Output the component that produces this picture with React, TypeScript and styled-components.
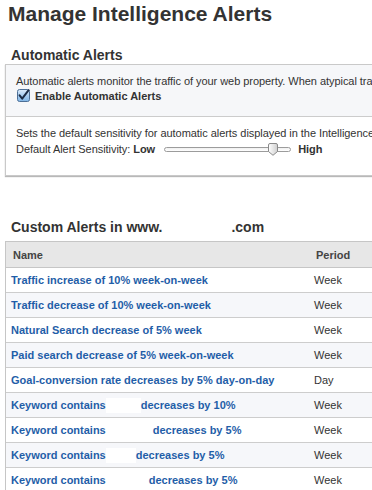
import React from "react";
import styled, { createGlobalStyle } from "styled-components";

const GlobalStyle = createGlobalStyle`
  html, body {
    margin: 0;
    padding: 0;
    overflow: hidden;
    background: #ffffff;
  }
  body {
    font-family: "Liberation Sans", Arial, Helvetica, sans-serif;
    color: #333333;
  }
`;

const Page = styled.div`
  width: 490px;
`;

const Title = styled.h1`
  margin: 2px 0 0 8px;
  font-size: 21px;
  line-height: 24px;
  font-weight: bold;
  color: #333333;
  white-space: nowrap;
`;

const SectionTitle = styled.h2<{ $top: number; $bottom: number }>`
  margin: ${(p) => p.$top}px 0 ${(p) => p.$bottom}px 11px;
  font-size: 14px;
  line-height: 16px;
  font-weight: bold;
  color: #333333;
  white-space: nowrap;
  display: flex;
  align-items: baseline;
`;

const Redacted = styled.span<{ $w: number }>`
  display: inline-block;
  width: ${(p) => p.$w}px;
`;

const Panel = styled.div`
  margin-left: 5px;
  width: 480px;
  border: 1px solid #c9c9c9;
  box-shadow: 0 1px 1px rgba(0, 0, 0, 0.28);
`;

const PanelSection = styled.div<{ $tint?: boolean; $bottom: number; $divider?: boolean }>`
  padding: 9px 10px ${(p) => p.$bottom}px 10px;
  background: ${(p) => (p.$tint ? "#f6f7f9" : "#ffffff")};
  border-top: ${(p) => (p.$divider ? "1px solid #cccccc" : "none")};
`;

const Text = styled.div`
  font-size: 11px;
  line-height: 14px;
  letter-spacing: -0.05px;
  color: #333333;
  white-space: nowrap;
`;

const CheckRow = styled.label`
  display: flex;
  align-items: center;
  height: 15px;
  gap: 5px;
  padding-left: 1px;
  font-size: 11px;
  font-weight: bold;
  color: #333333;
  white-space: nowrap;
`;

const SliderRow = styled.div`
  display: flex;
  align-items: center;
  height: 18px;
  font-size: 11px;
  letter-spacing: -0.05px;
  color: #333333;
  white-space: nowrap;
`;

const Strong = styled.b`
  font-weight: bold;
`;

const Track = styled.div`
  position: relative;
  width: 127px;
  height: 5px;
  margin: 1px 7px 0 9px;
  box-sizing: border-box;
  border: 1px solid #9c9c9c;
  border-radius: 3px;
  background: linear-gradient(#f0f0f0, #ffffff);
`;

const Thumb = styled.svg`
  position: absolute;
  left: 103px;
  top: -5px;
`;

const Table = styled.div`
  margin-left: 5px;
  width: 480px;
  border: 1px solid #c6c6c6;
  border-bottom: none;
`;

const Row = styled.div<{ $head?: boolean; $tint?: boolean }>`
  display: grid;
  grid-template-columns: 300px 1fr;
  align-items: center;
  box-sizing: border-box;
  height: 25px;
  border-bottom: 1px solid #cdcdcd;
  background: ${(p) => (p.$head ? "#e7e7e7" : p.$tint ? "#f6f7fa" : "#ffffff")};
  font-size: 11px;
  white-space: nowrap;
  ${(p) => (p.$head ? "height: 26px; border-bottom-color: #c6c6c6;" : "")}
`;

const HeadCell = styled.div<{ $pad: number }>`
  padding-left: ${(p) => p.$pad}px;
  font-weight: bold;
  color: #444444;
`;

const NameCell = styled.div`
  padding-left: 5px;
  display: flex;
  align-items: center;
`;

const AlertLink = styled.a`
  color: #1f5ea8;
  font-weight: bold;
  text-decoration: none;
  cursor: pointer;
`;

const Blank = styled.span<{ $w: number }>`
  display: inline-block;
  width: ${(p) => p.$w}px;
  height: 15px;
  background: #ffffff;
`;

const PeriodCell = styled.div`
  padding-left: 8px;
  color: #333333;
`;

const CheckIcon = () => (
  <svg width="13" height="13" viewBox="0 0 13 13">
    <defs>
      <linearGradient id="cbg" x1="0" y1="0" x2="0" y2="1">
        <stop offset="0" stopColor="#dcebfa" />
        <stop offset="0.5" stopColor="#a9cdf0" />
        <stop offset="1" stopColor="#7fb5e6" />
      </linearGradient>
    </defs>
    <rect x="0.5" y="0.5" width="12" height="12" rx="2" fill="url(#cbg)" stroke="#4d6f96" />
    <path d="M2.6 6.4 L5.2 9.6 L11.6 1.2" fill="none" stroke="#1b2b45" strokeWidth="2" strokeLinecap="round" strokeLinejoin="round" />
  </svg>
);

const ThumbIcon = () => (
  <Thumb width="10" height="13" viewBox="0 0 10 13">
    <defs>
      <linearGradient id="thg" x1="0" y1="0" x2="1" y2="0">
        <stop offset="0" stopColor="#ffffff" />
        <stop offset="1" stopColor="#cfcfcf" />
      </linearGradient>
    </defs>
    <path d="M0.5 2 Q0.5 0.5 2 0.5 H8 Q9.5 0.5 9.5 2 V8.5 L5 12.3 L0.5 8.5 Z" fill="url(#thg)" stroke="#8a8a8a" />
  </Thumb>
);

type Alert = { parts: (string | number)[]; period: string };

const alerts: Alert[] = [
  { parts: ["Traffic increase of 10% week-on-week"], period: "Week" },
  { parts: ["Traffic decrease of 10% week-on-week"], period: "Week" },
  { parts: ["Natural Search decrease of 5% week"], period: "Week" },
  { parts: ["Paid search decrease of 5% week-on-week"], period: "Week" },
  { parts: ["Goal-conversion rate decreases by 5% day-on-day"], period: "Day" },
  { parts: ["Keyword contains", 35, "decreases by 10%"], period: "Week" },
  { parts: ["Keyword contains", 47, "decreases by 5%"], period: "Week" },
  { parts: ["Keyword contains", 30, "decreases by 5%"], period: "Week" },
  { parts: ["Keyword contains", 43, "decreases by 5%"], period: "Week" },
];

export default function App() {
  return (
    <Page>
      <GlobalStyle />
      <Title>Manage Intelligence Alerts</Title>

      <SectionTitle $top={21} $bottom={1}>Automatic Alerts</SectionTitle>
      <Panel>
        <PanelSection $tint $bottom={13}>
          <Text>
            Automatic alerts monitor the traffic of your web property. When atypical traffic patterns are detected, an alert is generated.
          </Text>
          <CheckRow>
            <CheckIcon />
            Enable Automatic Alerts
          </CheckRow>
        </PanelSection>
        <PanelSection $divider $bottom={17}>
          <Text>
            Sets the default sensitivity for automatic alerts displayed in the Intelligence reports.
          </Text>
          <SliderRow>
            Default Alert Sensitivity:&nbsp;<Strong>Low</Strong>
            <Track>
              <ThumbIcon />
            </Track>
            <Strong>High</Strong>
          </SliderRow>
        </PanelSection>
      </Panel>

      <SectionTitle $top={43} $bottom={6}>
        Custom Alerts in www.<Redacted $w={69} />.com
      </SectionTitle>
      <Table>
        <Row $head>
          <HeadCell $pad={7}>Name</HeadCell>
          <HeadCell $pad={10}>Period</HeadCell>
        </Row>
        {alerts.map((a, i) => (
          <Row key={i} $tint={i % 2 === 1}>
            <NameCell>
              {a.parts.map((p, j) =>
                typeof p === "number" ? (
                  <Blank key={j} $w={p} />
                ) : (
                  <AlertLink key={j}>{p}</AlertLink>
                )
              )}
            </NameCell>
            <PeriodCell>{a.period}</PeriodCell>
          </Row>
        ))}
      </Table>
    </Page>
  );
}
